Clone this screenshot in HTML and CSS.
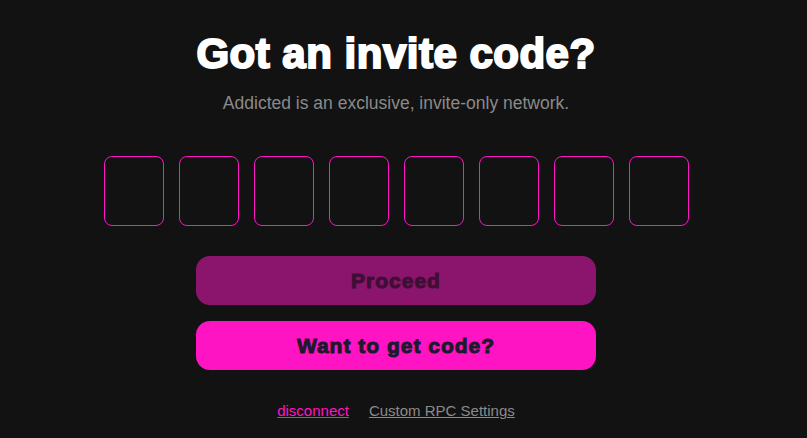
FILE: index.html
```html
<!DOCTYPE html>
<html>
<head>
<meta charset="utf-8">
<link rel="stylesheet" href="styles.css">
</head>
<body>
<main class="page">
  <h1 class="title">Got an invite code?</h1>
  <p class="subtitle">Addicted is an exclusive, invite-only network.</p>
  <div class="code-row">
    <input class="code-box" maxlength="1">
    <input class="code-box" maxlength="1">
    <input class="code-box" maxlength="1">
    <input class="code-box" maxlength="1">
    <input class="code-box" maxlength="1">
    <input class="code-box" maxlength="1">
    <input class="code-box" maxlength="1">
    <input class="code-box" maxlength="1">
  </div>
  <div class="actions">
    <button class="btn btn-disabled">Proceed</button>
    <button class="btn btn-primary">Want to get code?</button>
  </div>
  <div class="links">
    <a class="link link-pink" href="#">disconnect</a>
    <a class="link link-grey" href="#">Custom RPC Settings</a>
  </div>
</main>
</body>
</html>
```
FILE: styles.css
```css
html, body {
  margin: 0;
  padding: 0;
  background: #121212;
  height: 100%;
  overflow: hidden;
}
.page {
  box-sizing: border-box;
  width: 792px;
  display: flex;
  flex-direction: column;
  align-items: center;
  padding-top: 30px;
  font-family: "Liberation Sans", Arial, sans-serif;
}
.title {
  margin: 0;
  color: #ffffff;
  font-size: 42px;
  font-weight: 700;
  line-height: 48px;
  letter-spacing: 0.5px;
  -webkit-text-stroke: 2px #ffffff;
}
.subtitle {
  margin: 14px 0 0;
  color: #8a8a8a;
  font-size: 17.5px;
  line-height: 22px;
}
.code-row {
  display: flex;
  gap: 15px;
  margin-top: 42px;
}
.code-box {
  box-sizing: border-box;
  width: 60px;
  height: 70px;
  border: 1px solid #ff14c8;
  border-radius: 8px;
  background: transparent;
  padding: 0;
  outline: none;
}
.actions {
  display: flex;
  flex-direction: column;
  gap: 16px;
  margin-top: 30px;
}
.btn {
  width: 400px;
  height: 49px;
  border: none;
  border-radius: 14px;
  font-family: "Liberation Sans", Arial, sans-serif;
  font-size: 21px;
  font-weight: 700;
  letter-spacing: 1px;
  -webkit-text-stroke: 1px currentColor;
  padding: 0;
}
.btn-disabled {
  background: #8b156d;
  color: #3e0f35;
}
.btn-primary {
  background: #ff14c4;
  color: #1c1a2c;
}
.links {
  display: flex;
  gap: 20px;
  margin-top: 32px;
  font-size: 15px;
  line-height: 18px;
}
.link {
  text-decoration: underline;
}
.link-pink {
  color: #ff14c8;
}
.link-grey {
  color: #8a8a8a;
}
```
